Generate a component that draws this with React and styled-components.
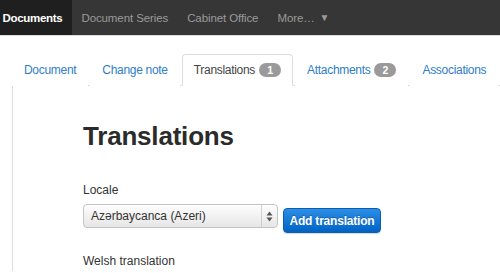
import React from "react";
import styled, { createGlobalStyle } from "styled-components";

const Global = createGlobalStyle`
  html, body { margin: 0; padding: 0; background: #fff; }
  body { font-family: "Liberation Sans", Arial, sans-serif; color: #333; overflow: hidden; }
`;

const Navbar = styled.div`
  height: 35px;
  background: #363636;
  border-bottom: 1px solid #dcdcdc;
  display: flex;
  align-items: stretch;
  margin-left: -7px;
`;

const NavItem = styled.div`
  display: flex;
  align-items: center;
  padding: 0 9.5px;
  font-size: 11.5px;
  white-space: nowrap;
  color: ${(p) => (p.$active ? "#fff" : "#9a9a9a")};
  background: ${(p) => (p.$active ? "#1f1f1f" : "transparent")};
  font-weight: ${(p) => (p.$active ? "bold" : "normal")};
  letter-spacing: ${(p) => (p.$active ? "-0.3px" : "-0.1px")};
`;

const Caret = styled.span`
  margin-left: 5px;
  font-size: 10px;
`;

const Main = styled.div`
  padding: 18px 0 0 12px;
`;

const Tabs = styled.div`
  display: flex;
  border-bottom: 1px solid #ddd;
  height: 31px;
`;

const Tab = styled.div`
  display: flex;
  align-items: center;
  flex-shrink: 0;
  white-space: nowrap;
  padding: 0 11px;
  margin-right: 2px;
  margin-bottom: -1px;
  font-size: 12px;
  color: ${(p) => (p.$active ? "#444" : "#2f7dc8")};
  background: #fff;
  border: 1px solid ${(p) => (p.$active ? "#ddd" : "transparent")};
  border-bottom-color: ${(p) => (p.$active ? "#fff" : "transparent")};
  border-radius: 4px 4px 0 0;
  letter-spacing: -0.3px;
`;

const Badge = styled.span`
  margin-left: 4px;
  background: #9a9a9a;
  color: #fff;
  font-weight: bold;
  font-size: 10.5px;
  border-radius: 8px;
  min-width: 22px;
  height: 14px;
  line-height: 14px;
  text-align: center;
  letter-spacing: 0;
`;

const Panel = styled.div`
  border-left: 1px solid #ddd;
  padding: 35px 0 0 70px;
  height: 150px;
`;

const Heading = styled.h1`
  margin: 0;
  font-size: 26px;
  line-height: 30px;
  font-weight: bold;
  color: #2b2b2b;
  letter-spacing: -0.2px;
`;

const Label = styled.div`
  font-size: 12px;
  line-height: 18px;
  color: #333;
  margin-top: ${(p) => p.$top || 0}px;
`;

const Row = styled.div`
  display: flex;
  align-items: flex-start;
  margin-top: 5px;
  gap: 5px;
`;

const Select = styled.div`
  width: 195px;
  height: 24px;
  box-sizing: border-box;
  border: 1px solid #c4c4c4;
  border-radius: 4px;
  background: linear-gradient(#fdfdfd, #e6e6e6);
  display: flex;
  align-items: stretch;
  box-shadow: inset 0 1px 0 #fff;
`;

const SelectValue = styled.div`
  flex: 1;
  display: flex;
  align-items: center;
  padding-left: 7px;
  font-size: 12px;
  color: #333;
`;

const SelectArrows = styled.div`
  width: 15px;
  border-left: 1px solid #cfcfcf;
  display: flex;
  align-items: center;
  justify-content: center;
`;

const Button = styled.div`
  margin-top: 4px;
  height: 25px;
  width: 98px;
  box-sizing: border-box;
  border: 1px solid #0a5fb4;
  border-radius: 4px;
  background: linear-gradient(#2d8ee6, #0063c4);
  color: #fff;
  font-weight: bold;
  font-size: 12px;
  display: flex;
  align-items: center;
  justify-content: center;
  text-shadow: 0 -1px 0 rgba(0, 0, 0, 0.25);
  box-shadow: 0 1px 1px rgba(0, 0, 0, 0.15);
  letter-spacing: -0.2px;
`;

export default function App() {
  return (
    <>
      <Global />
      <Navbar>
        <NavItem $active>Documents</NavItem>
        <NavItem>Document Series</NavItem>
        <NavItem>Cabinet Office</NavItem>
        <NavItem>
          More…<Caret>▼</Caret>
        </NavItem>
      </Navbar>
      <Main>
        <Tabs>
          <Tab>Document</Tab>
          <Tab>Change note</Tab>
          <Tab $active>
            Translations<Badge>1</Badge>
          </Tab>
          <Tab>
            Attachments<Badge>2</Badge>
          </Tab>
          <Tab>Associations</Tab>
        </Tabs>
        <Panel>
          <Heading>Translations</Heading>
          <Label $top={30}>Locale</Label>
          <Row>
            <Select>
              <SelectValue>Azərbaycanca (Azeri)</SelectValue>
              <SelectArrows>
                <svg width="7" height="11" viewBox="0 0 7 11">
                  <path d="M3.5 0.5 L6.5 4.5 L0.5 4.5 Z" fill="#555" />
                  <path d="M3.5 10.5 L6.5 6.5 L0.5 6.5 Z" fill="#555" />
                </svg>
              </SelectArrows>
            </Select>
            <Button>Add translation</Button>
          </Row>
          <Label $top={19}>Welsh translation</Label>
        </Panel>
      </Main>
    </>
  );
}
